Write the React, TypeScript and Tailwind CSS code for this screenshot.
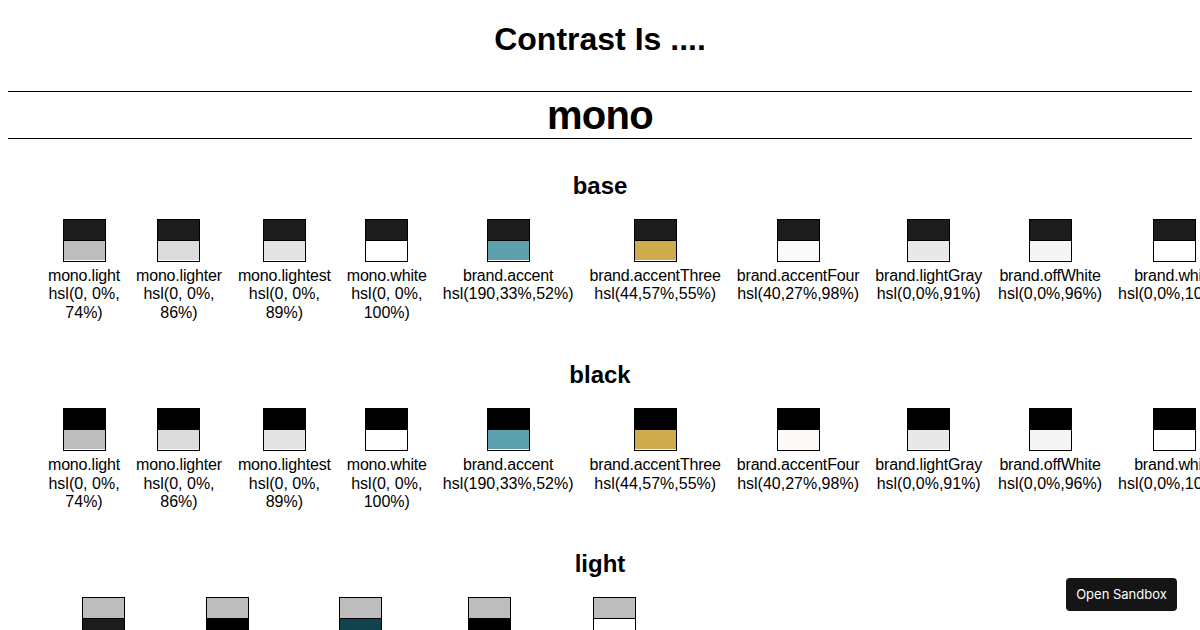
import React from 'react';

type Swatch = { name: string; value: string; color: string };

const mainColors: Swatch[] = [
  { name: 'mono.light', value: 'hsl(0, 0%, 74%)', color: '#bdbdbd' },
  { name: 'mono.lighter', value: 'hsl(0, 0%, 86%)', color: '#dbdbdb' },
  { name: 'mono.lightest', value: 'hsl(0, 0%, 89%)', color: '#e3e3e3' },
  { name: 'mono.white', value: 'hsl(0, 0%, 100%)', color: '#ffffff' },
  { name: 'brand.accent', value: 'hsl(190,33%,52%)', color: '#5ca0ad' },
  { name: 'brand.accentThree', value: 'hsl(44,57%,55%)', color: '#ceab4b' },
  { name: 'brand.accentFour', value: 'hsl(40,27%,98%)', color: '#fbfaf8' },
  { name: 'brand.lightGray', value: 'hsl(0,0%,91%)', color: '#e8e8e8' },
  { name: 'brand.offWhite', value: 'hsl(0,0%,96%)', color: '#f5f5f5' },
  { name: 'brand.white', value: 'hsl(0,0%,100%)', color: '#ffffff' },
];

const lightColors: Swatch[] = [
  { name: 'brand.darkGray', value: 'hsl(0,0%,11%)', color: '#1c1c1c' },
  { name: 'mono.black', value: 'hsl(0, 0%, 0%)', color: '#000000' },
  { name: 'brand.accentDark', value: 'hsl(192,65%,19%)', color: '#11434f' },
  { name: 'brand.black', value: 'hsl(0,0%,0%)', color: '#000000' },
  { name: 'mono.white', value: 'hsl(0, 0%, 100%)', color: '#ffffff' },
];

const sections = [
  { title: 'base', bg: '#1c1c1c', colors: mainColors, tight: true },
  { title: 'black', bg: '#000000', colors: mainColors, tight: true },
  { title: 'light', bg: '#bdbdbd', colors: lightColors, tight: false },
];

function ColorItem({ swatch, bg, tight }: { swatch: Swatch; bg: string; tight: boolean }) {
  return (
    <li className="flex flex-col items-center text-center">
      <div className="w-[43px] h-[43px] border border-black flex flex-col">
        <div className="h-5" style={{ backgroundColor: bg }} />
        <div className="h-5 border-t border-black" style={{ backgroundColor: swatch.color }} />
      </div>
      <div className="mt-[5px] text-[16px] leading-[18.4px] text-black">
        <div className={tight ? 'tracking-[-0.18px]' : ''}>{swatch.name}</div>
        <div>{swatch.value}</div>
      </div>
    </li>
  );
}

export default function App() {
  return (
    <div className="h-screen overflow-hidden bg-white px-2 pt-[21px] font-['Liberation_Sans',Arial,sans-serif] text-black">
      <h1 className="text-center text-[32px] leading-[37px] font-bold">Contrast Is ....</h1>

      <div className="mt-[33px] border-y border-black text-center text-[40px] leading-[46px] font-bold tracking-[-0.7px]">mono</div>

      {sections.map((section) => (
        <section key={section.title} className="pt-[33px] pb-[6px]">
          <h2 className="text-center text-[24px] leading-[28px] font-bold mb-[19px]">{section.title}</h2>
          <ul className="flex flex-row gap-4 pl-10">
            {section.colors.map((c, i) => (
              <ColorItem key={section.title + i} swatch={c} bg={section.bg} tight={section.tight} />
            ))}
          </ul>
        </section>
      ))}

      <button className="fixed right-[23px] bottom-[19px] h-[33px] w-[111px] rounded-[4px] bg-[#151515] text-white text-[13px] font-['Inter',sans-serif]">
        Open Sandbox
      </button>
    </div>
  );
}
